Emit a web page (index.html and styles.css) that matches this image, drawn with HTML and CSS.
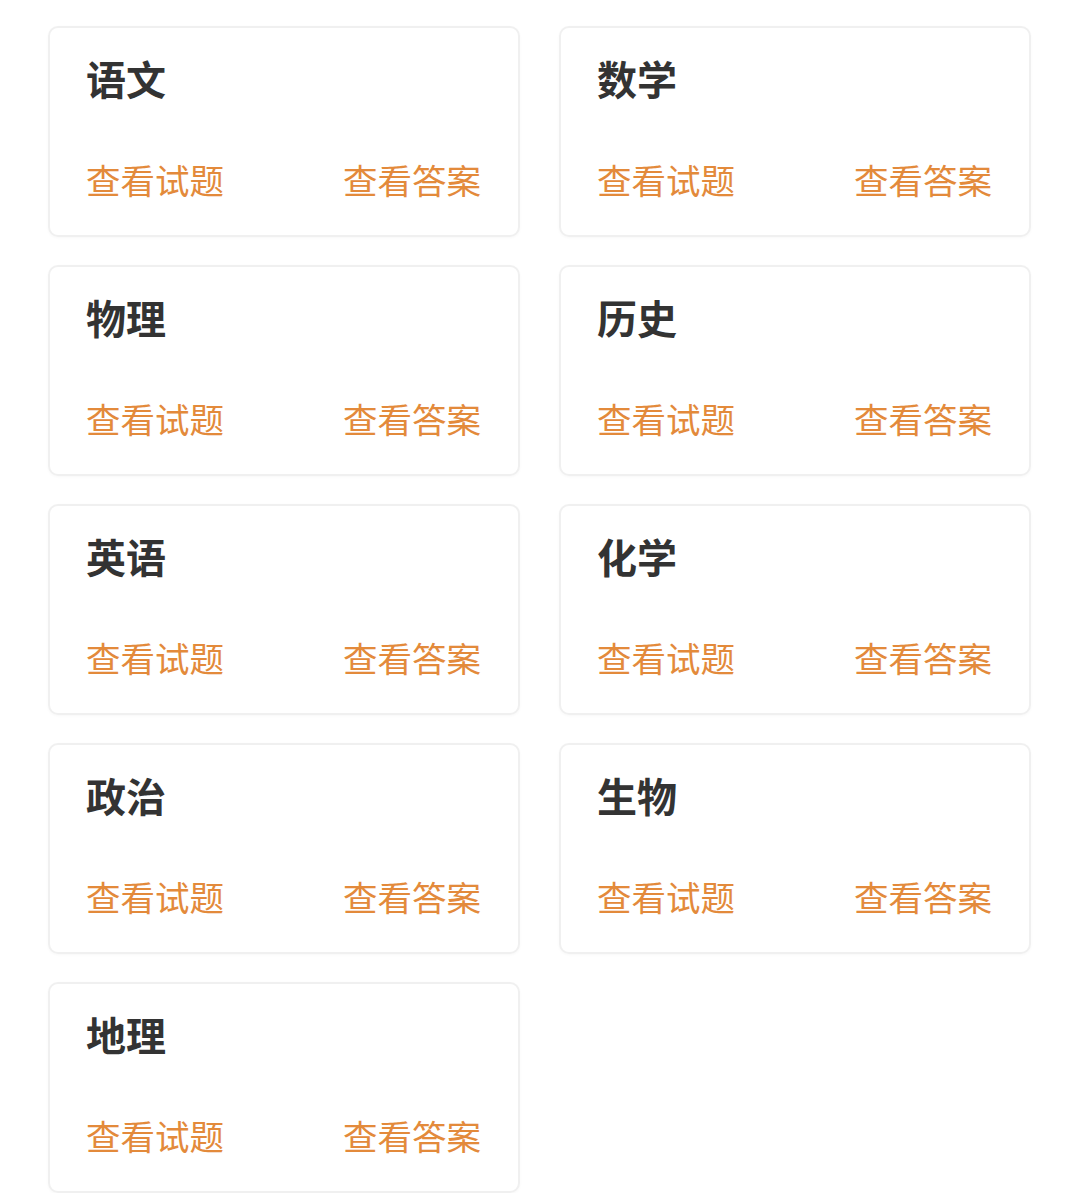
FILE: index.html
```html
<!DOCTYPE html>
<html lang="zh">
<head>
<meta charset="utf-8">
<link rel="stylesheet" href="styles.css">
</head>
<body>
<div class="grid">
  <div class="card"><div class="title">语文</div><div class="links"><span>查看试题</span><span>查看答案</span></div></div>
  <div class="card"><div class="title">数学</div><div class="links"><span>查看试题</span><span>查看答案</span></div></div>
  <div class="card"><div class="title">物理</div><div class="links"><span>查看试题</span><span>查看答案</span></div></div>
  <div class="card"><div class="title">历史</div><div class="links"><span>查看试题</span><span>查看答案</span></div></div>
  <div class="card"><div class="title">英语</div><div class="links"><span>查看试题</span><span>查看答案</span></div></div>
  <div class="card"><div class="title">化学</div><div class="links"><span>查看试题</span><span>查看答案</span></div></div>
  <div class="card"><div class="title">政治</div><div class="links"><span>查看试题</span><span>查看答案</span></div></div>
  <div class="card"><div class="title">生物</div><div class="links"><span>查看试题</span><span>查看答案</span></div></div>
  <div class="card"><div class="title">地理</div><div class="links"><span>查看试题</span><span>查看答案</span></div></div>
</div>
</body>
</html>
```
FILE: styles.css
```css
html, body {
  margin: 0;
  padding: 0;
  background: #ffffff;
  font-family: "Noto Sans CJK SC", "Noto Sans", sans-serif;
}
.grid {
  display: grid;
  grid-template-columns: 472px 472px;
  column-gap: 39px;
  row-gap: 28px;
  padding: 26px 48px 0 48px;
}
.card {
  box-sizing: border-box;
  height: 211px;
  border: 2px solid #f0f0f0;
  border-radius: 10px;
  box-shadow: 0 1px 3px rgba(0,0,0,0.03);
  padding: 30px 37px 0 36px;
  display: flex;
  flex-direction: column;
}
.title {
  font-size: 40px;
  line-height: 40px;
  font-weight: 700;
  color: #333333;
}
.links {
  margin-top: 64px;
  display: flex;
  justify-content: space-between;
  font-size: 34.5px;
  line-height: 35px;
  color: #e38a3b;
}
```
